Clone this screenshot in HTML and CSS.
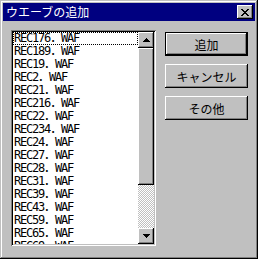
FILE: index.html
```html
<!DOCTYPE html>
<html lang="ja">
   <head>
      <meta charset="utf-8">
      <title>ウエーブの追加</title>
      <link rel="stylesheet" href="styles.css">
   </head>
   <body>
      <div class="window">
         <div class="titlebar">
            <span class="title">ウエーブの追加</span>
            <span class="close">
               <svg width="8" height="7" viewBox="0 0 8 7" shape-rendering="crispEdges">
                  <path d="M0 0h2v1H0zM6 0h2v1H6zM1 1h2v1H1zM5 1h2v1H5zM2 2h4v1H2zM3 3h2v1H3zM2 4h4v1H2zM1 5h2v1H1zM5 5h2v1H5zM0 6h2v1H0zM6 6h2v1H6z" fill="#000"/>
               </svg>
            </span>
         </div>
         <div class="content">
            <div class="listbox">
               <ul class="items">
                  <li class="focus">REC176．WAF</li>
                  <li>REC189．WAF</li>
                  <li>REC19．WAF</li>
                  <li>REC2．WAF</li>
                  <li>REC21．WAF</li>
                  <li>REC216．WAF</li>
                  <li>REC22．WAF</li>
                  <li>REC234．WAF</li>
                  <li>REC24．WAF</li>
                  <li>REC27．WAF</li>
                  <li>REC28．WAF</li>
                  <li>REC31．WAF</li>
                  <li>REC39．WAF</li>
                  <li>REC43．WAF</li>
                  <li>REC59．WAF</li>
                  <li>REC65．WAF</li>
                  <li>REC69．WAF</li>
               </ul>
               <div class="scrollbar">
                  <span class="arrow">
                     <svg width="7" height="4" viewBox="0 0 7 4" shape-rendering="crispEdges"><path d="M3 0h1v1h1v1h1v1h1v1H0V3h1V2h1V1h1z" fill="#000"/></svg>
                  </span>
                  <span class="thumb"></span>
                  <span class="track"></span>
                  <span class="arrow">
                     <svg width="7" height="4" viewBox="0 0 7 4" shape-rendering="crispEdges"><path d="M0 0h7v1H6v1H5v1H4v1H3V3H2V2H1V1H0z" fill="#000"/></svg>
                  </span>
               </div>
            </div>
            <div class="buttons">
               <button class="btn default">追加</button>
               <button class="btn">キャンセル</button>
               <button class="btn">その他</button>
            </div>
         </div>
      </div>
   </body>
</html>
```

FILE: styles.css
```css
body {
   margin: 0;
   background-color: #c0c0c0;
   font-family: "Noto Sans CJK JP", sans-serif;
   font-size: 12px;
}
.window {
   box-sizing: border-box;
   width: 258px;
   height: 259px;
   padding: 3px;
   background-color: #c0c0c0;
   box-shadow: inset -1px -1px #000, inset 1px 1px #c0c0c0, inset -2px -2px #808080, inset 2px 2px #fff;
}
.titlebar {
   display: flex;
   align-items: center;
   justify-content: space-between;
   height: 18px;
   padding: 0 2px 0 3px;
   background-color: #000080;
   color: #fff;
}
.title {
   line-height: 18px;
}
.close, .arrow, .thumb, .btn {
   background-color: #c0c0c0;
   box-shadow: inset -1px -1px #000, inset 1px 1px #fff, inset -2px -2px #808080;
}
.close {
   display: flex;
   align-items: center;
   justify-content: center;
   width: 16px;
   height: 14px;
}
.content {
   display: flex;
   gap: 9px;
   padding: 9px 0 0 8px;
}
.listbox {
   box-sizing: border-box;
   display: flex;
   width: 145px;
   height: 216px;
   padding: 2px;
   box-shadow: inset 1px 1px #808080, inset -1px -1px #fff, inset 2px 2px #000, inset -2px -2px #c0c0c0;
}
.items {
   flex: 1;
   margin: 0;
   padding: 0;
   list-style: none;
   overflow: hidden;
   background-color: #fff;
}
.items li {
   height: 13px;
   padding-left: 1px;
   font-family: "DejaVu Sans Mono", "Noto Sans CJK JP", monospace;
   font-size: 12px;
   letter-spacing: -1.2px;
   line-height: 13px;
   white-space: nowrap;
}
.items li.focus {
   outline: 1px dotted #000;
   outline-offset: -1px;
}
.scrollbar {
   display: flex;
   flex-direction: column;
   width: 16px;
}
.arrow {
   display: flex;
   align-items: center;
   justify-content: center;
   height: 16px;
}
.thumb {
   height: 137px;
}
.track {
   flex: 1;
   background: repeating-conic-gradient(#fff 0 25%, #c0c0c0 0 50%) 0 0 / 2px 2px;
}
.buttons {
   display: flex;
   flex-direction: column;
   gap: 8px;
   padding-top: 2px;
}
.btn {
   box-sizing: border-box;
   width: 83px;
   height: 24px;
   padding: 0;
   border: none;
   font-family: "Noto Sans CJK JP", sans-serif;
   font-size: 12px;
   color: #000;
}
.btn.default {
   border: 1px solid #000;
}
```
